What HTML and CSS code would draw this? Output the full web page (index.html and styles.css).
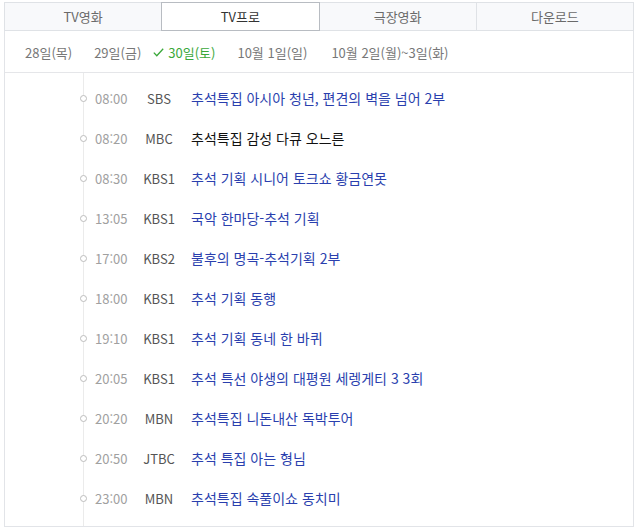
FILE: index.html
```html
<!DOCTYPE html>
<html lang="ko">
<head>
<meta charset="utf-8">
<link rel="stylesheet" href="styles.css">
</head>
<body>
<div class="wrap">
  <ul class="tabs">
    <li class="tab">TV영화</li>
    <li class="tab on">TV프로</li>
    <li class="tab">극장영화</li>
    <li class="tab">다운로드</li>
  </ul>
  <div class="body">
    <ul class="dates">
      <li>28일(목)</li>
      <li>29일(금)</li>
      <li class="on"><svg class="check" width="11" height="9" viewBox="0 0 11 9"><path d="M0.8 4.6 L3.8 7.8 L10.2 0.8" fill="none" stroke="#3aa83a" stroke-width="1.3"/></svg>30일(토)</li>
      <li>10월 1일(일)</li>
      <li class="last">10월 2일(월)~3일(화)</li>
    </ul>
    <ul class="list">
      <li class="row"><span class="dot"></span><span class="time">08:00</span><span class="ch">SBS</span><span class="title">추석특집 아시아 청년, 편견의 벽을 넘어 2부</span></li>
      <li class="row"><span class="dot"></span><span class="time">08:20</span><span class="ch">MBC</span><span class="title plain">추석특집 감성 다큐 오느른</span></li>
      <li class="row"><span class="dot"></span><span class="time">08:30</span><span class="ch">KBS1</span><span class="title">추석 기획 시니어 토크쇼 황금연못</span></li>
      <li class="row"><span class="dot"></span><span class="time">13:05</span><span class="ch">KBS1</span><span class="title">국악 한마당-추석 기획</span></li>
      <li class="row"><span class="dot"></span><span class="time">17:00</span><span class="ch">KBS2</span><span class="title">불후의 명곡-추석기획 2부</span></li>
      <li class="row"><span class="dot"></span><span class="time">18:00</span><span class="ch">KBS1</span><span class="title">추석 기획 동행</span></li>
      <li class="row"><span class="dot"></span><span class="time">19:10</span><span class="ch">KBS1</span><span class="title">추석 기획 동네 한 바퀴</span></li>
      <li class="row"><span class="dot"></span><span class="time">20:05</span><span class="ch">KBS1</span><span class="title">추석 특선 야생의 대평원 세렝게티 3 3회</span></li>
      <li class="row"><span class="dot"></span><span class="time">20:20</span><span class="ch">MBN</span><span class="title">추석특집 니돈내산 독박투어</span></li>
      <li class="row"><span class="dot"></span><span class="time">20:50</span><span class="ch">JTBC</span><span class="title">추석 특집 아는 형님</span></li>
      <li class="row"><span class="dot"></span><span class="time">23:00</span><span class="ch">MBN</span><span class="title">추석특집 속풀이쇼 동치미</span></li>
    </ul>
  </div>
</div>
</body>
</html>
```
FILE: styles.css
```css
* { box-sizing: border-box; }
html, body { margin: 0; padding: 0; background: #fff; }
body {
  font-family: "Noto Sans CJK KR", "Noto Sans", sans-serif;
  font-size: 13px;
  color: #333;
}
ul { list-style: none; margin: 0; padding: 0; }
.wrap {
  width: 630px;
  margin: 2px 0 0 4px;
}
.tabs {
  display: flex;
  height: 29px;
}
.tab {
  flex: 1;
  border: 1px solid #dfe2e6;
  background: #f8f9fb;
  color: #6a6a6a;
  display: flex;
  align-items: center;
  justify-content: center;
  font-size: 13px;
}
.tab + .tab { margin-left: -1px; }
.tab.on {
  border-color: #b8bcc2;
  background: #fff;
  color: #333;
  position: relative;
  z-index: 1;
}
.body {
  border: 1px solid #e2e4e8;
  border-top: none;
}
.dates {
  display: flex;
  gap: 22px;
  height: 42px;
  align-items: center;
  padding: 1px 0 0 20px;
  border-bottom: 1px solid #e5e6e9;
  color: #777;
}
.dates li { display: flex; align-items: center; }
.dates li.on { color: #3aa83a; }
.dates li.last { margin-left: 2px; }
.check { margin-left: -10px; margin-right: 4px; }
.list {
  margin-left: 78px;
  border-left: 1px solid #ebebeb;
  padding: 5px 0 8px;
}
.row {
  display: flex;
  align-items: center;
  height: 40px;
}
.dot {
  width: 7px;
  height: 7px;
  border: 1px solid #bdbdbd;
  border-radius: 50%;
  background: #fff;
  margin-left: -4px;
  flex: none;
}
.time {
  margin-left: 8px;
  width: 40px;
  color: #a0a0a0;
}
.ch {
  width: 48px;
  text-align: center;
  color: #555;
}
.title {
  margin-left: 8px;
  font-size: 14px;
  color: #2a3fae;
}
.title.plain { color: #111; }
```
